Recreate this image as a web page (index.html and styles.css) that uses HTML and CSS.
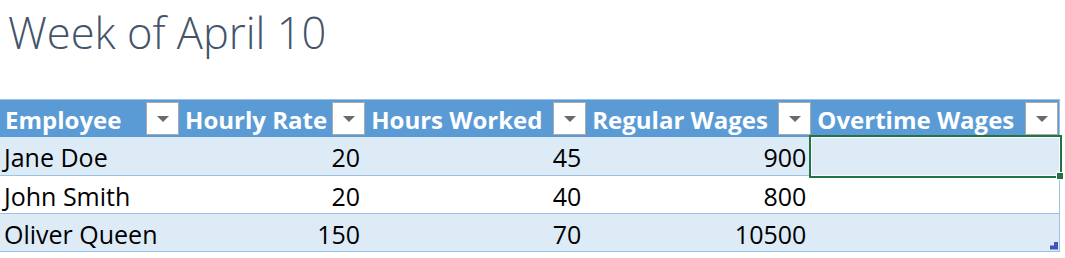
FILE: index.html
```html
<!DOCTYPE html>
<html>
<head>
<meta charset="utf-8">
<link rel="stylesheet" href="styles.css">
</head>
<body>
<h1 class="title">Week of April 10</h1>
<table class="tbl">
  <colgroup>
    <col class="c1"><col class="c2"><col class="c3"><col class="c4"><col class="c5">
  </colgroup>
  <thead>
    <tr>
      <th><div class="hcell"><span>Employee</span><span class="filter"><span class="tri"></span></span></div></th>
      <th><div class="hcell"><span>Hourly Rate</span><span class="filter"><span class="tri"></span></span></div></th>
      <th><div class="hcell"><span>Hours Worked</span><span class="filter"><span class="tri"></span></span></div></th>
      <th><div class="hcell"><span>Regular Wages</span><span class="filter"><span class="tri"></span></span></div></th>
      <th><div class="hcell"><span>Overtime Wages</span><span class="filter"><span class="tri"></span></span></div></th>
    </tr>
  </thead>
  <tbody>
    <tr class="band">
      <td class="txt">Jane Doe</td><td class="num">20</td><td class="num">45</td><td class="num">900</td>
      <td class="sel"><span class="selbox"><span class="handle"></span></span></td>
    </tr>
    <tr>
      <td class="txt">John Smith</td><td class="num">20</td><td class="num">40</td><td class="num">800</td><td></td>
    </tr>
    <tr class="band">
      <td class="txt">Oliver Queen</td><td class="num">150</td><td class="num">70</td><td class="num">10500</td>
      <td class="last"><span class="resize"></span></td>
    </tr>
  </tbody>
</table>
</body>
</html>
```
FILE: styles.css
```css
html, body {
  margin: 0;
  padding: 0;
  background: #ffffff;
}
body {
  font-family: "Open Sans", "Liberation Sans", sans-serif;
  width: 1065px;
  height: 258px;
  overflow: hidden;
}
.title {
  margin: 0;
  height: 99px;
  padding: 6px 0 0 8px;
  box-sizing: border-box;
  font-family: "Open Sans", sans-serif;
  font-weight: 300;
  font-size: 43.5px;
  line-height: 54px;
  color: #44546a;
}
.tbl {
  border-collapse: collapse;
  table-layout: fixed;
  width: 1060px;
  border-top: 1px solid #9bc2e6;
  border-right: 1px solid #9bc2e6;
  font-size: 25px;
  color: #000;
}
.c1 { width: 180px; }
.c2 { width: 186px; }
.c3 { width: 221px; }
.c4 { width: 225px; }
.c5 { width: 247px; }
th {
  background: #5b9bd5;
  color: #ffffff;
  height: 37px;
  padding: 0;
  font-size: 24px;
  font-weight: 700;
  text-align: left;
}
.hcell {
  display: flex;
  align-items: center;
  justify-content: space-between;
  padding: 2px 1px 0 5px;
  height: 37px;
  box-sizing: border-box;
  white-space: nowrap;
}
.filter {
  width: 33px;
  height: 33px;
  margin-top: -2px;
  box-sizing: border-box;
  border: 1px solid #ababab;
  background: #ffffff;
  display: flex;
  align-items: center;
  justify-content: center;
  flex: none;
}
.tri {
  width: 0;
  height: 0;
  border-left: 6px solid transparent;
  border-right: 6px solid transparent;
  border-top: 6px solid #6b6b6b;
}
td {
  height: 38px;
  padding: 3px 0 0;
  border-bottom: 1px solid #9bc2e6;
  white-space: nowrap;
  box-sizing: border-box;
  line-height: 34px;
}
tr.band td {
  background: #ddebf7;
}
.txt {
  padding-left: 4px;
}
.num {
  text-align: right;
  padding-right: 6px;
}
.sel, .last {
  position: relative;
}
.selbox {
  position: absolute;
  left: -3px;
  top: -2px;
  right: -3px;
  bottom: -3px;
  border: 2px solid #217346;
  box-shadow: inset 0 0 0 1px #ffffff;
}
.handle {
  position: absolute;
  right: -4px;
  bottom: -4px;
  width: 6px;
  height: 6px;
  background: #217346;
  border: 1px solid #ffffff;
}
.resize {
  position: absolute;
  right: 1px;
  bottom: 1px;
  width: 8px;
  height: 8px;
  background: #4355b9;
  clip-path: polygon(100% 0, 100% 100%, 0 100%, 0 50%, 50% 50%, 50% 0);
}
```
